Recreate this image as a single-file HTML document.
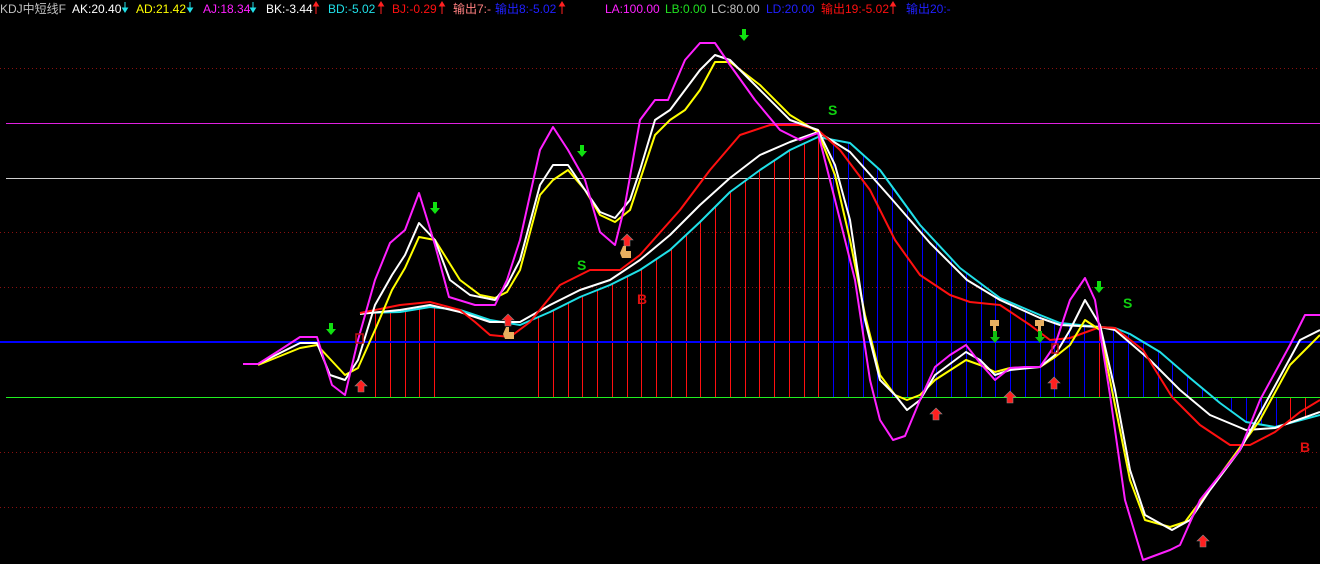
<!DOCTYPE html>
<html><head><meta charset="utf-8"><style>
body{margin:0;background:#000;width:1320px;height:564px;overflow:hidden}
svg{display:block}
text{font-family:"Liberation Sans","Noto Sans CJK SC",sans-serif;font-size:12px}
</style></head><body>
<svg id="s" width="1320" height="564" xmlns="http://www.w3.org/2000/svg">
<rect width="1320" height="564" fill="#000"/>
<g stroke-width="1" shape-rendering="crispEdges">
<line x1="0" y1="68.5" x2="1320" y2="68.5" stroke="#8a1010" stroke-dasharray="1,3"/>
<line x1="6" y1="123.5" x2="1320" y2="123.5" stroke="#e020e0"/>
<line x1="6" y1="178.5" x2="1320" y2="178.5" stroke="#d0d0d0"/>
<line x1="0" y1="232.5" x2="1320" y2="232.5" stroke="#8a1010" stroke-dasharray="1,3"/>
<line x1="0" y1="287.5" x2="1320" y2="287.5" stroke="#8a1010" stroke-dasharray="1,3"/>
<line x1="0" y1="452.5" x2="1320" y2="452.5" stroke="#8a1010" stroke-dasharray="1,3"/>
<line x1="0" y1="507.5" x2="1320" y2="507.5" stroke="#8a1010" stroke-dasharray="1,3"/>
</g>
<g id="bars" stroke-width="1" shape-rendering="crispEdges"></g>
<line x1="0" y1="342" x2="1320" y2="342" stroke="#0000ff" stroke-width="2" shape-rendering="crispEdges"/>
<line x1="6" y1="397.5" x2="1320" y2="397.5" stroke="#20f020" stroke-width="1" shape-rendering="crispEdges"/>
<g fill="none" stroke-width="2" stroke-linejoin="round">
<polyline id="cy" stroke="#20e0e8" points="360,313 400,312 430,307 460,310 490,320 520,325 550,312 580,297 610,285 640,270 670,250 700,222 730,192 760,170 790,150 818,137 850,143 880,170 920,225 960,268 1000,298 1040,315 1060,323 1100,327 1115,328 1130,334 1160,352 1190,378 1220,403 1246,422 1275,427 1320,415"/>
<polyline stroke="#ffffff" points="360,314 400,310 430,305 460,312 490,322 520,322 550,305 580,290 610,280 640,260 670,235 700,205 730,178 760,155 790,142 818,132 850,152 890,197 930,243 967,280 1000,300 1040,318 1060,325 1100,327 1115,330 1150,360 1180,390 1210,415 1246,430 1275,428 1320,412"/>
<polyline stroke="#ff1010" points="360,313 400,305 430,302 460,310 475,322 490,335 510,337 530,322 560,285 590,270 620,270 640,255 680,210 710,170 740,135 770,125 800,125 818,130 840,150 870,190 895,240 920,275 950,295 970,302 1000,305 1030,325 1050,340 1070,338 1100,327 1115,328 1143,350 1172,397 1200,425 1230,445 1250,445 1275,432 1300,412 1320,400"/>
<polyline stroke="#ffff00" points="258,365 300,348 317,345 345,375 358,368 375,330 392,290 405,268 419,237 435,240 460,280 480,295 495,298 507,292 520,270 540,195 553,180 568,170 585,190 600,215 615,222 630,210 655,135 670,120 685,110 700,90 715,62 730,62 760,85 790,115 818,132 835,175 850,240 865,315 880,375 895,395 907,400 920,395 935,380 966,360 980,365 995,372 1010,368 1040,367 1055,357 1070,345 1085,320 1100,330 1115,405 1130,480 1145,520 1170,527 1185,522 1220,475 1260,420 1290,365 1320,335"/>
<polyline stroke="#ffffff" points="258,364 300,343 317,343 330,375 345,380 358,360 375,305 392,275 405,255 419,223 435,240 450,280 470,295 495,300 507,285 520,260 540,185 553,165 568,165 585,190 600,212 615,218 630,200 640,170 655,120 670,110 685,90 700,70 715,55 730,60 760,90 790,120 818,130 835,165 850,220 865,320 880,380 895,395 907,410 920,400 935,375 966,352 980,360 995,375 1010,370 1040,367 1055,355 1070,330 1085,300 1100,325 1115,390 1130,470 1145,515 1172,530 1190,520 1210,490 1240,450 1270,395 1300,340 1320,330"/>
<polyline stroke="#ff20ff" points="243,364 258,364 280,350 300,337 317,337 332,385 345,395 358,340 375,280 390,243 405,230 419,193 435,245 449,297 475,305 495,305 507,280 520,240 540,150 553,127 568,150 585,180 600,232 615,245 625,205 640,120 655,100 668,100 685,60 700,43 715,43 730,65 755,100 780,130 800,140 818,133 835,200 855,280 870,380 880,420 893,440 905,436 920,400 935,367 950,355 966,345 980,363 995,380 1010,368 1025,367 1040,367 1055,345 1070,300 1085,278 1095,300 1110,395 1125,500 1143,560 1170,550 1180,545 1200,500 1240,450 1260,400 1290,345 1305,315 1320,315"/>
</g>
<g font-weight="bold">
<text x="828" y="115" fill="#10d010" style="font-size:14px">S</text>
<text x="577" y="270" fill="#10d010" style="font-size:14px">S</text>
<text x="1123" y="308" fill="#10d010" style="font-size:14px">S</text>
<text x="637" y="304" fill="#e01010" style="font-size:14px">B</text>
<text x="1300" y="452" fill="#e01010" style="font-size:14px">B</text>
</g>
<g id="marks"></g>
<text y="13" fill="#c0c0c0"><tspan x="0">KDJ中短线F</tspan><tspan x="72" fill="#fff">AK:20.40</tspan><tspan x="136" fill="#ffff00">AD:21.42</tspan><tspan x="203" fill="#ff20ff">AJ:18.34</tspan><tspan x="266" fill="#fff">BK:-3.44</tspan><tspan x="328" fill="#20e0e8">BD:-5.02</tspan><tspan x="392" fill="#ff1010">BJ:-0.29</tspan><tspan x="453" fill="#ff8080">输出7:-</tspan><tspan x="495" fill="#2020ff">输出8:-5.02</tspan><tspan x="605" fill="#ff20ff">LA:100.00</tspan><tspan x="665" fill="#20e020">LB:0.00</tspan><tspan x="711" fill="#c0c0c0">LC:80.00</tspan><tspan x="766" fill="#2020ff">LD:20.00</tspan><tspan x="821" fill="#ff1010">输出19:-5.02</tspan><tspan x="906" fill="#2020ff">输出20:-</tspan></text>
<g id="hdr"></g>
</svg>
<script>
var NS="http://www.w3.org/2000/svg";
function el(p,t,a){var e=document.createElementNS(NS,t);for(var k in a)e.setAttribute(k,a[k]);p.appendChild(e);return e;}
var pts=document.getElementById('cy').getAttribute('points').split(' ').map(function(s){return s.split(',').map(Number)});
function cy(x){for(var i=0;i<pts.length-1;i++){if(x>=pts[i][0]&&x<=pts[i+1][0]){var t=(x-pts[i][0])/(pts[i+1][0]-pts[i][0]);return pts[i][1]+t*(pts[i+1][1]-pts[i][1]);}}return 397;}
var bars=document.getElementById('bars');
function bar(x,c){x=Math.round(x)+0.5;el(bars,'line',{x1:x,x2:x,y1:397,y2:cy(x),stroke:c});}
[375,390,405,419,434].forEach(function(x){bar(x,'#ff1010')});
for(var k=0;k<20;k++)bar(538+k*14.75,'#ff1010');
for(var x=833;x<1280;x+=14.75){if(Math.abs(x-1099)<5)bar(x,'#ff1010');else bar(x,'#0000ff');}
bar(1290,'#ff1010');bar(1305,'#ff1010');
var m=document.getElementById('marks');
function down(x,y,c){el(m,'path',{d:'M'+(x-2)+' '+(y-7)+'h4v6h3l-5,6l-5,-6h3z',fill:c||'#10e010'});}
function up(x,y){el(m,'path',{d:'M'+x+' '+(y-6)+'l6,6h-3v6h-6v-6h-3z',fill:'#ff2020',stroke:'#888','stroke-width':0.6});}
function hand(x,y){el(m,'path',{d:'M'+(x-2)+' '+(y-6)+'h3v5h5v7h-9l-2,-5z',fill:'#e8b060'});}
[[331,330],[435,209],[582,152],[744,36],[1099,288]].forEach(function(p){down(p[0],p[1])});
[[995,338],[1040,338]].forEach(function(p){down(p[0],p[1],'#10c010')});
[[361,386],[627,240],[508,320],[936,414],[1010,397],[1054,383],[1203,541]].forEach(function(p){up(p[0],p[1])});
[[625,252],[508,333]].forEach(function(p){hand(p[0],p[1])});
[[995,325],[1040,325]].forEach(function(p){el(m,'path',{d:'M'+(p[0]-5)+' '+(p[1]-5)+'h9v6h-3v5h-3v-5h-3z',fill:'#e8b060'})});
el(m,'rect',{x:356,y:334,width:7,height:9,fill:'none',stroke:'#c01010','stroke-width':1.5});
el(m,'rect',{x:1052,y:344,width:6,height:9,fill:'none',stroke:'#c01010','stroke-width':1.5});
var h=document.getElementById('hdr');
function ha(x,dn,c){if(dn)el(h,'path',{d:'M'+x+' 2v8M'+(x-2.5)+' 8l2.5,4l2.5,-4z',stroke:c,fill:c,'stroke-width':1});else el(h,'path',{d:'M'+x+' 14v-9M'+(x-2.5)+' 6l2.5,-4l2.5,4z',stroke:c,fill:c,'stroke-width':1});}
ha(125,1,'#20e0e8');ha(190,1,'#20e0e8');ha(253,1,'#20e0e8');ha(316,0,'#ff2020');ha(381,0,'#ff2020');ha(442,0,'#ff2020');ha(562,0,'#ff2020');ha(893,0,'#ff2020');
</script>
</body></html>
